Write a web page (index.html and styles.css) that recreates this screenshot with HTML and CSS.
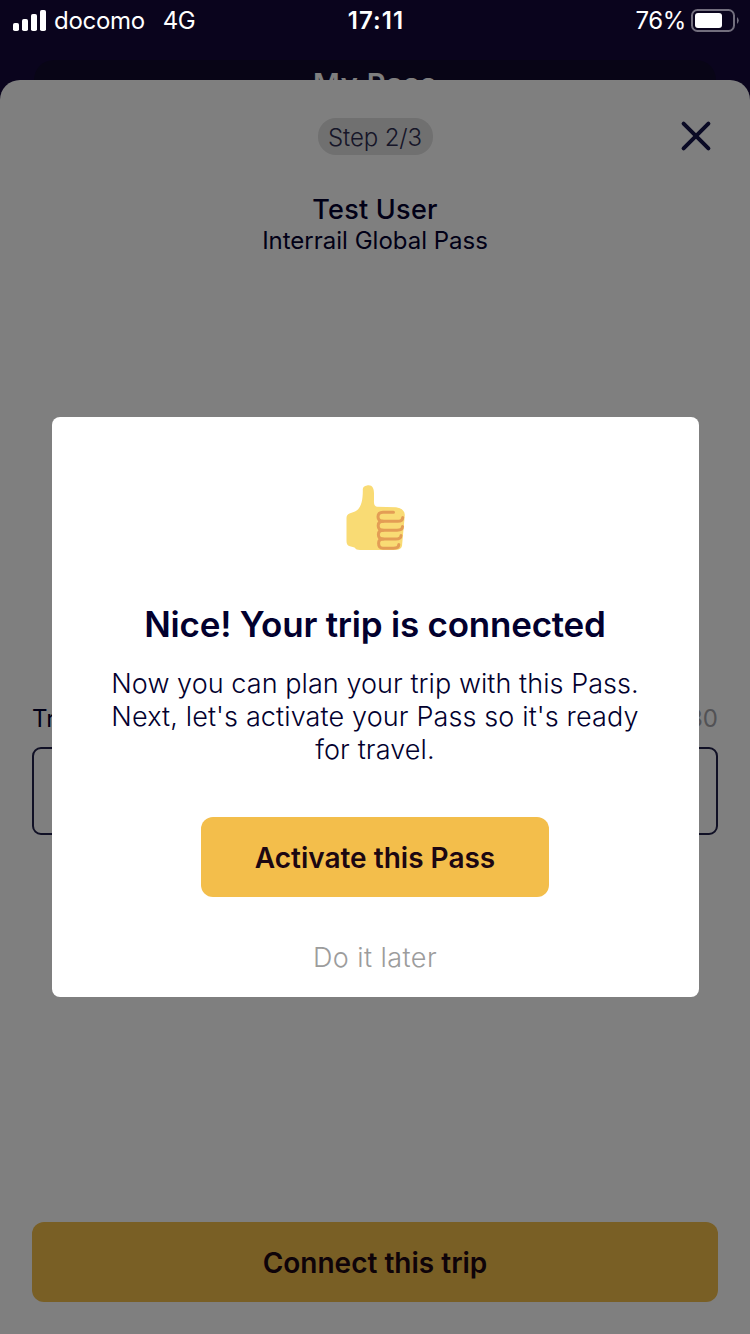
FILE: index.html
```
<!DOCTYPE html>
<html lang="en">
<head>
<meta charset="utf-8">
<title>Connect trip</title>
<link rel="stylesheet" href="styles.css">
</head>
<body>
<div class="screen">
  <header class="backdrop">
    <div class="back-card"><span class="back-title">My Pass</span></div>
  </header>
  <main class="sheet">
    <div class="sheet-top">
      <span class="step">Step 2/3</span>
      <svg class="close" viewBox="0 0 32 32"><path d="M3.6 3.6 28.4 28.4M28.4 3.6 3.6 28.4"/></svg>
    </div>
    <h2 class="user">Test User</h2>
    <p class="pass">Interrail Global Pass</p>
    <div class="field">
      <div class="field-head"><span>Trip</span><span class="count">0/30</span></div>
      <div class="field-box"></div>
    </div>
    <button class="btn connect">Connect this trip</button>
  </main>
  <div class="scrim">
    <section class="dialog">
      <svg class="thumb" viewBox="0 0 60 68">
        <path fill="#f9db74" d="M21 1.500C26 .5 28 4 28 9.500V16Q27.500 22.500 31 22.700L50 23.300Q58.500 24.500 58.800 31L56 62Q55 66 49 66H14Q10 66 8.500 63.500L3 62Q.5 61 .5 57V34Q.5 30.500 3.500 29.500L9 27.500C15 25 17 17 16.800 5Q17 2 21 1.500Z"/>
        <g fill="none" stroke="#e39d55" stroke-width="3" stroke-linecap="round" stroke-linejoin="round">
          <path d="M47.500 28.300H37Q32 28.300 32 32.800Q32 37.300 37 37.300H51.500Q56.700 37.300 56.700 33.500"/>
          <path d="M37 37.300Q32.200 37.300 32.200 41.700Q32.200 46.200 37 46.200H51Q56.500 46.200 56.500 42.500"/>
          <path d="M37 46.200Q32.400 46.200 32.400 50.600Q32.400 55 37 55H49.500Q55 55 55 51.500"/>
          <path d="M37 55Q32.600 55 32.600 59.200Q32.600 64.200 37 64.200H47.500Q52.800 64.200 52.800 60.500"/>
        </g>
      </svg>
      <h1 class="title">Nice! Your trip is connected</h1>
      <p class="text"><span class="line-a">Now you can plan your trip with this Pass.</span><br><span class="line-b">Next, let's activate your Pass so it's ready</span><br><span class="line-b">for travel.</span></p>
      <button class="btn activate">Activate this Pass</button>
      <button class="later">Do it later</button>
    </section>
  </div>
  <div class="status">
    <div class="status-left">
      <svg class="signal" viewBox="0 0 33 21"><rect y="13" width="6" height="8" rx="1.800"/><rect x="9" y="9" width="6" height="12" rx="1.800"/><rect x="18" y="4" width="6" height="17" rx="1.800"/><rect x="27" width="6" height="21" rx="1.800"/></svg>
      <span class="carrier">docomo</span><span class="net">4G</span>
    </div>
    <span class="clock">17:11</span>
    <div class="status-right">
      <span class="pct">76%</span>
      <svg class="battery" viewBox="0 0 48 23"><rect x="1" y="1" width="42" height="21" rx="5.500" fill="none" stroke="#726e7d" stroke-width="2"/><rect x="4" y="4" width="27" height="15" rx="3" fill="#fff"/><path d="M46 8q3.500 3.500 0 7z" fill="#726e7d"/></svg>
    </div>
  </div>
</div>
</body>
</html>
```
FILE: styles.css
```
* { box-sizing: border-box; }
body { margin: 0; font-family: Inter, "Liberation Sans", sans-serif; }
h1, h2, p { margin: 0; }
button { border: 0; padding: 0; font-family: inherit; background: none; }

.screen { position: relative; width: 750px; height: 1334px; overflow: hidden; background: #14093a; display: flex; flex-direction: column; color: #02002e; }

.backdrop { height: 80px; padding: 60px 34px 0; flex: none; }
.back-card { height: 60px; border-radius: 20px; background: #110a2c; text-align: center; }
.back-title { display: block; font-size: 29px; font-weight: 600; line-height: 48px; letter-spacing: .8px; color: #fff; }

.sheet { position: relative; flex: 1; background: #fff; border-radius: 20px 20px 0 0; padding: 38px 32px 32px; display: flex; flex-direction: column; align-items: center; }
.sheet-top { width: 100%; display: grid; grid-template-columns: 1fr auto 1fr; align-items: center; height: 37px; }
.step { grid-column: 2; width: 115px; height: 37px; border-radius: 18px; background: #e0e0e0; color: #2d2c50; font-size: 24px; font-weight: 300; line-height: 39px; letter-spacing: -.1px; text-align: center; }
.close { justify-self: end; width: 32px; height: 32px; margin: 0 6px 2px 0; stroke: #14144a; stroke-width: 4; stroke-linecap: round; fill: none; }
.user { margin-top: 38px; font-size: 27px; font-weight: 500; line-height: 33px; letter-spacing: .25px; }
.pass { font-size: 24px; line-height: 30px; }
.field { width: 100%; margin-top: 448px; }
.field-head { display: flex; justify-content: space-between; font-size: 24px; line-height: 30px; margin-bottom: 13px; }
.count { color: #a5a5ab; }
.field-box { height: 88px; border: 2px solid #20204a; border-radius: 9px; }
.btn { display: block; height: 80px; border-radius: 12px; background: #f3be4b; color: #1c0712; font-size: 28px; font-weight: 600; line-height: 80px; text-align: center; }
.connect { width: 100%; margin-top: auto; padding-top: 1px; }

.scrim { position: absolute; inset: 0; background: rgba(0, 0, 0, .5); padding: 417px 51px 0 52px; }
.dialog { height: 580px; background: #fff; border-radius: 8px; padding: 68px 1px 0 0; display: flex; flex-direction: column; align-items: center; }
.thumb { width: 60px; height: 68px; margin: -1px 0 1px 1px; }
.title { margin-top: 49px; font-size: 35px; font-weight: 600; line-height: 44px; letter-spacing: -.22px; white-space: nowrap; }
.text { margin-top: 21px; font-size: 27px; font-weight: 300; line-height: 33px; text-align: center; white-space: nowrap; }
.line-a { letter-spacing: .06px; }
.line-b { letter-spacing: .13px; }
.activate { width: 348px; margin-top: 51px; padding-top: 1px; flex: none; }
.later { margin-top: 41px; font-size: 27px; font-weight: 300; line-height: 40px; letter-spacing: .45px; color: #9c9c9c; }

.status { position: absolute; top: 0; left: 0; right: 0; height: 41px; padding: 0 11px 0 13px; display: grid; grid-template-columns: 1fr auto 1fr; align-items: center; color: #fff; font-size: 24px; line-height: 41px; }
.status-left, .status-right { display: flex; align-items: center; }
.status-right { justify-content: flex-end; }
.signal { width: 33px; height: 21px; fill: #fff; margin-right: 8px; }
.carrier { letter-spacing: -.3px; }
.net { margin-left: 18px; letter-spacing: -.5px; }
.clock { font-weight: 600; letter-spacing: 1.1px; }
.pct { letter-spacing: -.4px; }
.battery { width: 48px; height: 23px; margin-left: 5px; }
```
